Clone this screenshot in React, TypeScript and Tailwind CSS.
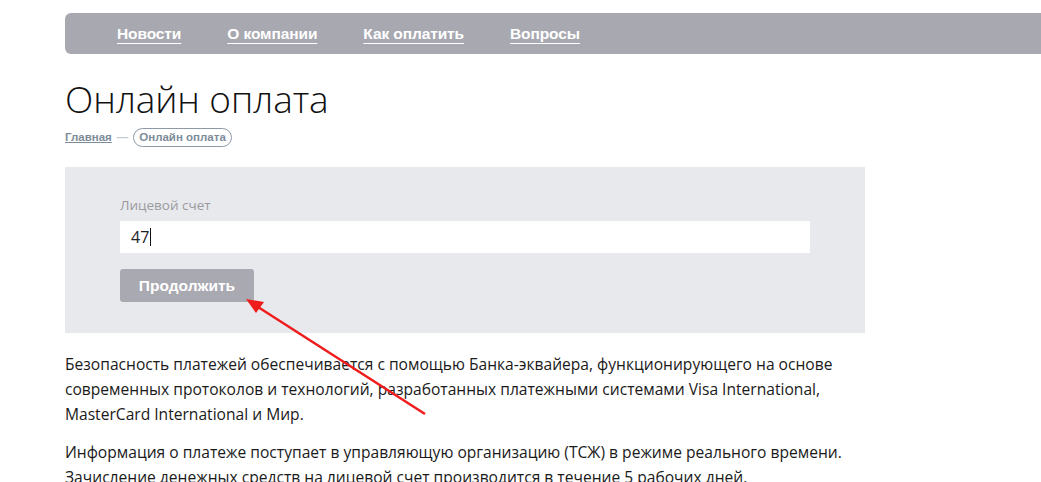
const navLinks = ["Новости", "О компании", "Как оплатить", "Вопросы"];

function Arrow() {
  return (
    <svg
      className="pointer-events-none absolute left-0 top-0"
      width="1041"
      height="482"
      viewBox="0 0 1041 482"
      aria-hidden
    >
      <line x1="425" y1="414" x2="258" y2="307" stroke="#ef1c1c" strokeWidth="2.5" />
      <polygon points="246,299 264,302 256,313" fill="#ef1c1c" />
    </svg>
  );
}

export default function App() {
  return (
    <div className="relative h-[482px] w-[1041px] overflow-hidden bg-white font-['Open_Sans',sans-serif]">
      <nav className="ml-[65px] mt-[13px] flex h-[41px] items-center gap-[46px] rounded-l-md bg-[#a8a8b1] pl-[52px]">
        {navLinks.map((label) => (
          <a
            key={label}
            href="#"
            className="text-[15.5px] font-bold tracking-[-0.1px] text-white underline decoration-1 underline-offset-[4px] font-['Liberation_Sans',sans-serif]"
          >
            {label}
          </a>
        ))}
      </nav>

      <div className="ml-[65px] w-[800px]">
        <h1 className="mt-[25px] text-[37px] font-light leading-[40px] text-[#111] tracking-[-0.1px]">
          Онлайн оплата
        </h1>

        <div className="mt-[9px] flex items-center gap-[5px] text-[11.5px] font-bold font-['Liberation_Sans',sans-serif] text-[#7d8c99]">
          <a href="#" className="underline">Главная</a>
          <span className="text-[#c5cbd0]">—</span>
          <span className="rounded-full border border-[#8d9aa5] px-[5px] leading-[17px]">Онлайн оплата</span>
        </div>

        <div className="mt-[20px] h-[166px] bg-[#e8e9ed] pl-[55px] pt-[28px]">
          <label className="block text-[13.5px] text-[#9a9a9f]">Лицевой счет</label>
          <div className="mt-[6px] flex h-[32px] w-[690px] items-center bg-white pl-[11px] text-[16px] text-[#222]">
            47<span className="ml-px h-[18px] w-px bg-[#111]" />
          </div>
          <button
            type="button"
            className="mt-[16px] h-[33px] w-[134px] rounded-[3px] bg-[#a9a9b1] text-[15.5px] font-bold text-white font-['Liberation_Sans',sans-serif]"
          >
            Продолжить
          </button>
        </div>

        <div className="mt-[19px] text-[15.6px] leading-[25px] text-[#1a1a1a]">
          <p>
            Безопасность платежей обеспечивается с помощью Банка-эквайера, функционирующего на основе
            современных протоколов и технологий, разработанных платежными системами Visa International,
            MasterCard International и Мир.
          </p>
          <p className="mt-[13px]">
            Информация о платеже поступает в управляющую организацию (ТСЖ) в режиме реального времени.
            Зачисление денежных средств на лицевой счет производится в течение 5 рабочих дней.
          </p>
        </div>
      </div>

      <Arrow />
    </div>
  );
}
